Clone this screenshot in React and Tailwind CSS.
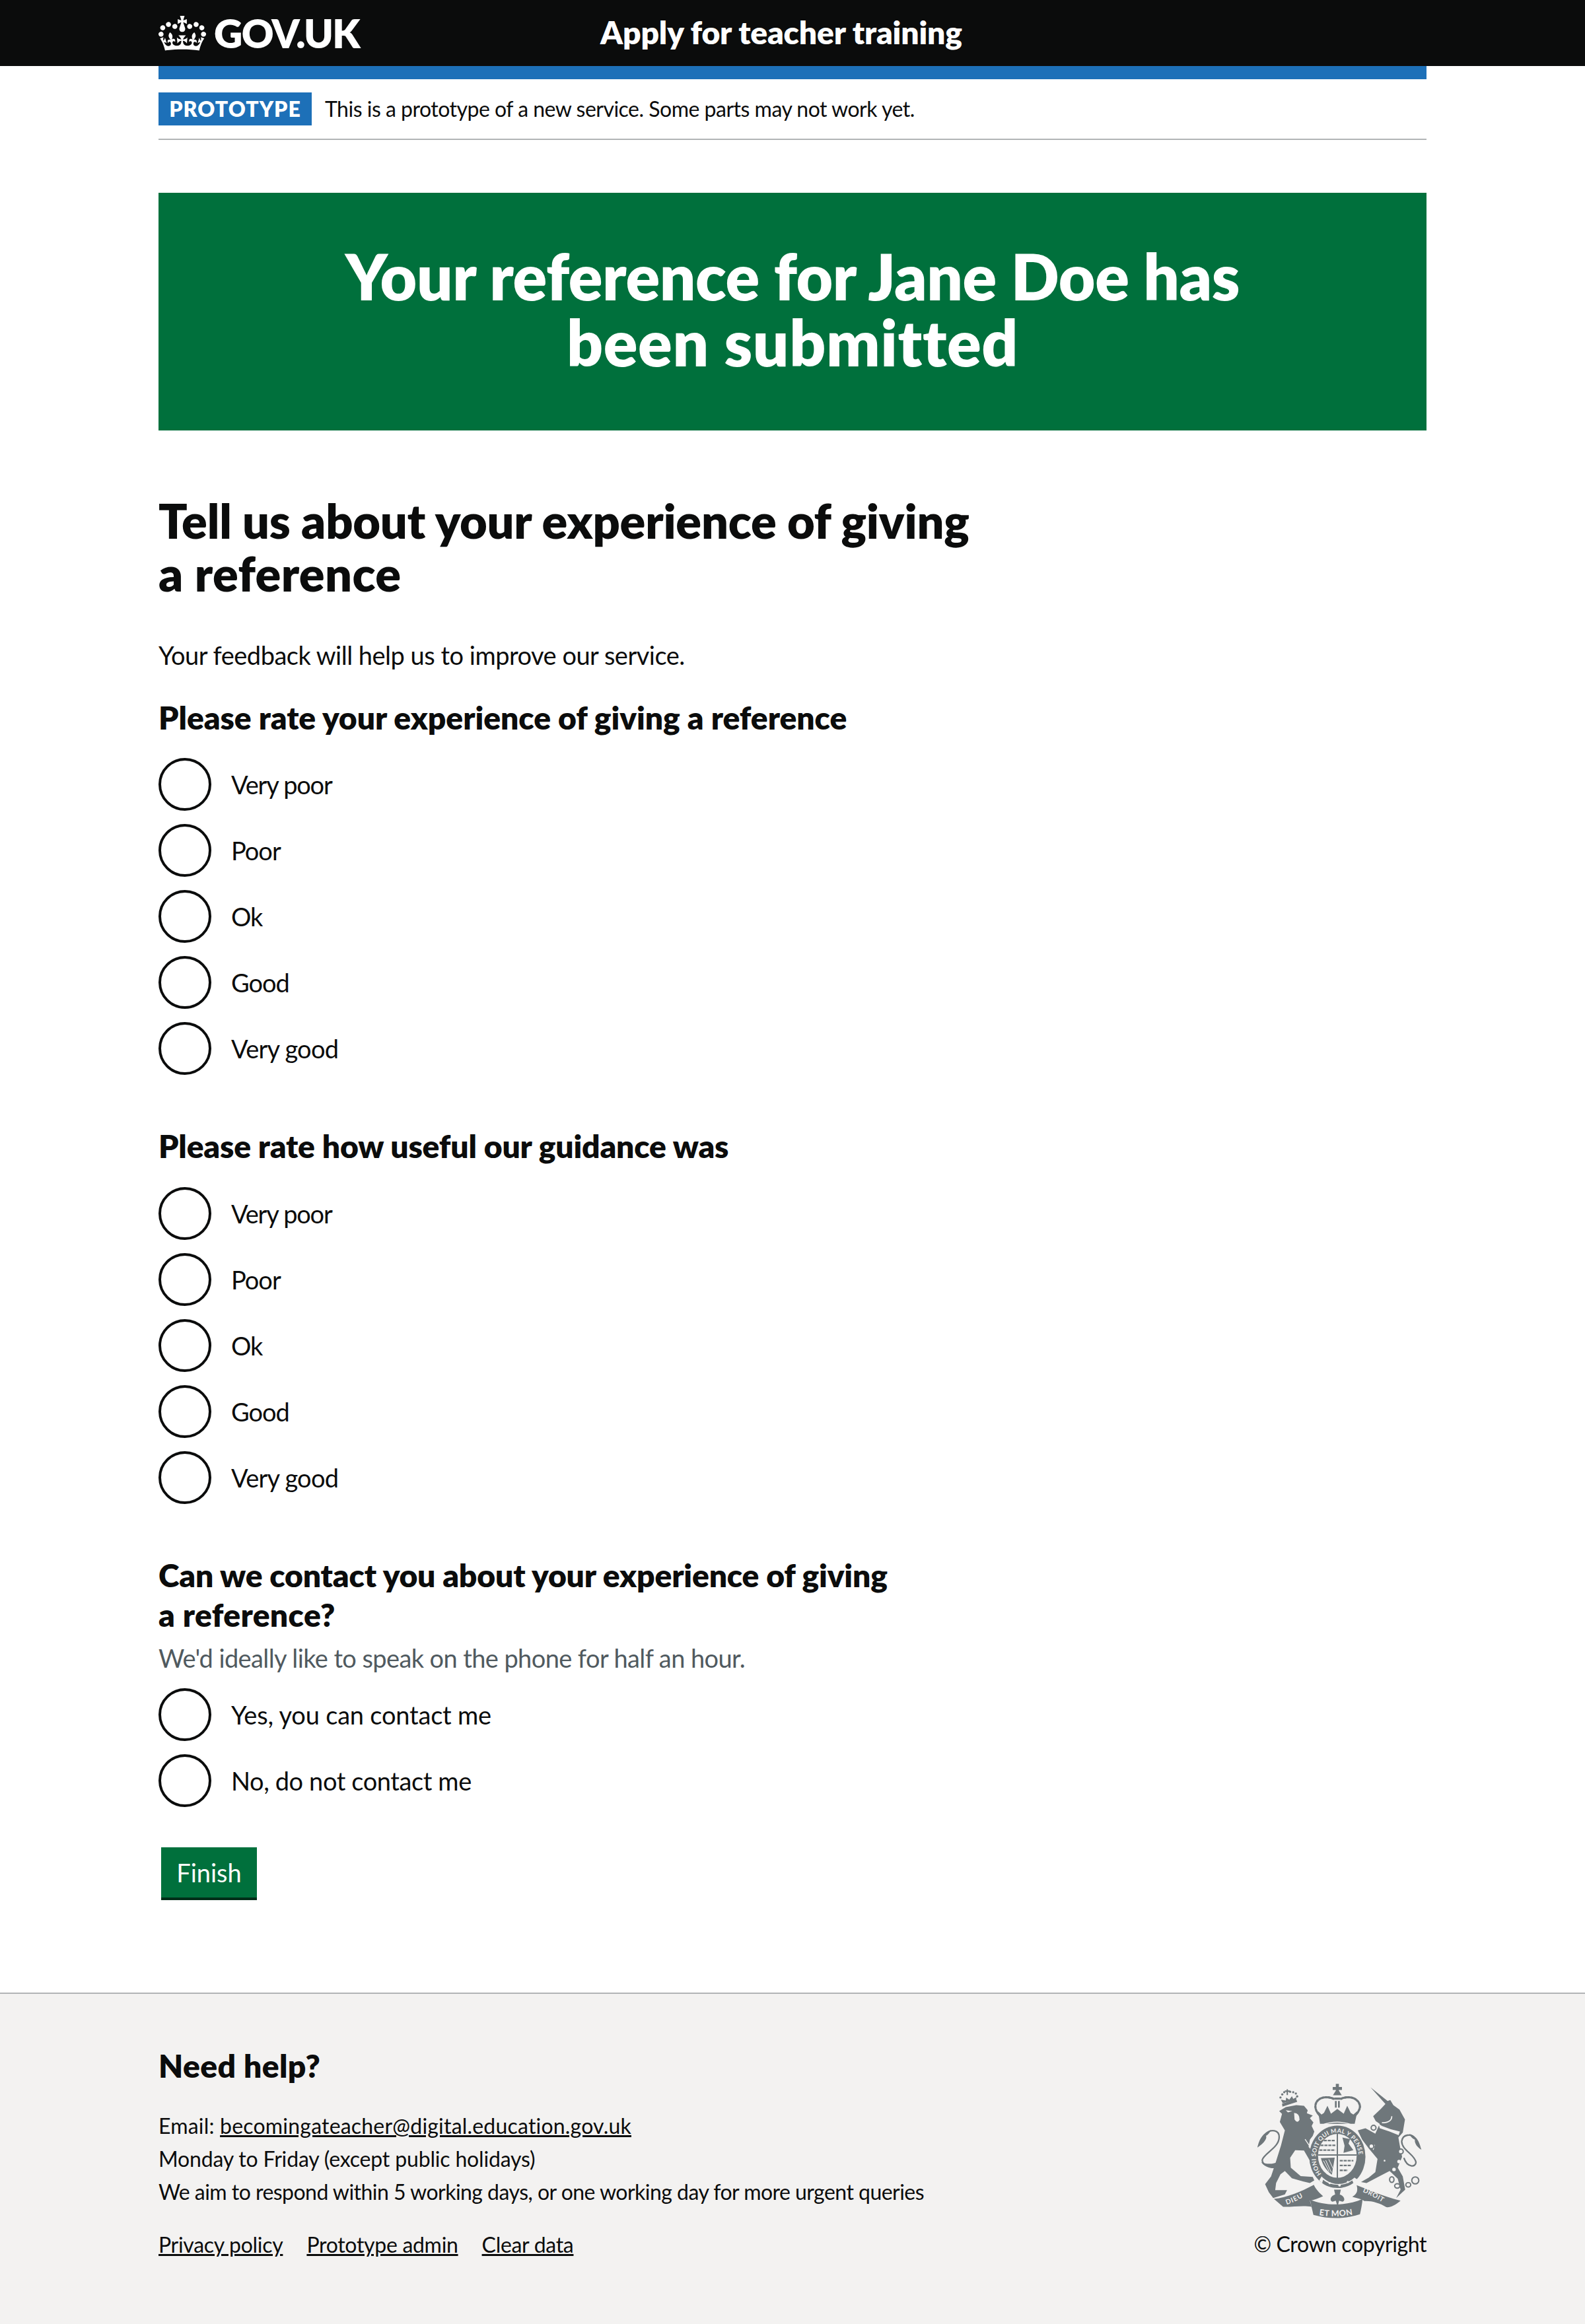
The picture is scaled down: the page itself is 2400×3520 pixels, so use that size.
import React from "react";

const CROWN = "M25 30.2c3.5 1.5 7.7-.2 9.1-3.7 1.5-3.6-.2-7.8-3.9-9.2-3.6-1.4-7.6.3-9.1 3.9-1.4 3.5.3 7.5 3.9 9zM9 39.5c3.6 1.5 7.8-.2 9.2-3.7 1.5-3.6-.2-7.8-3.9-9.1-3.6-1.5-7.6.2-9.1 3.8-1.4 3.5.3 7.5 3.8 9zM4.4 57.2c3.5 1.5 7.7-.2 9.1-3.8 1.5-3.6-.2-7.7-3.9-9.1-3.5-1.5-7.6.3-9.1 3.8-1.4 3.5.3 7.6 3.9 9.1zm38.3-21.4c3.5 1.5 7.7-.2 9.1-3.8 1.5-3.6-.2-7.7-3.9-9.1-3.6-1.5-7.6.3-9.1 3.8-1.3 3.6.4 7.7 3.9 9.1zm64.4-5.6c-3.6 1.5-7.8-.2-9.1-3.7-1.5-3.6.2-7.8 3.8-9.2 3.6-1.4 7.7.3 9.2 3.9 1.3 3.5-.4 7.5-3.9 9zm15.9 9.3c-3.6 1.5-7.7-.2-9.1-3.7-1.5-3.6.2-7.8 3.7-9.1 3.6-1.5 7.7.2 9.2 3.8 1.5 3.5-.3 7.5-3.8 9zm4.7 17.7c-3.6 1.5-7.8-.2-9.2-3.8-1.5-3.6.2-7.7 3.9-9.1 3.6-1.5 7.7.3 9.2 3.8 1.3 3.5-.4 7.6-3.9 9.1zM89.3 35.8c-3.6 1.5-7.8-.2-9.2-3.8-1.4-3.6.2-7.7 3.9-9.1 3.6-1.5 7.7.3 9.2 3.8 1.4 3.6-.3 7.7-3.9 9.1zM69.7 17.7l8.9 4.7V9.3l-8.9 2.8c-.2-.3-.5-.6-.9-.9L72.4 0H59.6l3.5 11.2c-.3.3-.6.5-.9.9l-8.8-2.8v13.1l8.8-4.7c.3.3.6.7.9.9l-5 15.4v.1c-.2.8-.4 1.6-.4 2.4 0 4.1 3.1 7.5 7 8.1h.2c.3 0 .7.1 1 .1.4 0 .7 0 1-.1h.2c4-.6 7.1-4.1 7.1-8.1 0-.8-.1-1.7-.4-2.4V34l-5.1-15.4c.4-.2.7-.6 1-.9zM66 92.8c16.9 0 32.8 1.1 47.1 3.2 4-16.9 8.9-26.7 14-33.5l-9.6-3.4c1 4.9 1.1 7.2 0 10.2-1.5-1.4-3-4.3-4.2-8.7L108.6 76c2.8-2 5-3.2 7.5-3.3-4.4 9.4-10 11.9-13.6 11.2-4.3-.8-6.3-4.6-5.6-7.9 1-4.7 5.7-5.9 8-.5 4.3-8.7-3-11.4-7.6-8.8 7.1-7.2 7.9-13.5 2.1-21.1-8 6.1-8.1 12.3-4.5 20.8-4.7-5.4-12.1-2.5-9.5 6.2 3.4-5.2 7.9-2 7.2 3.1-.6 4.3-6.4 7.8-13.5 7.2-10.3-.9-10.9-8-11.2-13.8 2.5-.5 7.1 1.8 11 7.3L80.2 60c-4.1 4.4-8 5.3-12.3 5.4 1.4-4.4 8-11.6 8-11.6H55.5s6.4 7.2 7.9 11.6c-4.2-.1-8-1-12.3-5.4l1.4 16.4c3.9-5.5 8.5-7.7 10.9-7.3-.3 5.8-.9 12.8-11.1 13.8-7.2.6-12.9-2.9-13.5-7.2-.7-5 3.8-8.3 7.1-3.1 2.7-8.7-4.6-11.6-9.4-6.2 3.7-8.5 3.6-14.7-4.6-20.8-5.8 7.6-5 13.9 2.2 21.1-4.7-2.6-11.9.1-7.7 8.8 2.3-5.5 7.1-4.2 8.1.5.7 3.3-1.3 7.1-5.7 7.9-3.5.7-9-1.8-13.5-11.2 2.5.1 4.7 1.3 7.5 3.3l-4.7-15.4c-1.2 4.4-2.7 7.2-4.3 8.7-1.1-3-.9-5.3 0-10.2l-9.5 3.4c5 6.9 9.9 16.7 14 33.5 14.8-2.1 30.8-3.2 47.7-3.2z";

const G = "#6f777b";
const BG = "#f3f2f1";

function Crest({ w = 250, h = 204 }) {
  return (
    <svg viewBox="130 108 752 612" width={w} height={h} aria-label="Royal coat of arms">
      <defs>
        <path id="garter" d="M428 522 A98 112 0 1 1 566 522" />
        <path id="dieu" d="M266 658 C300 648 335 628 368 606" />
        <path id="etmon" d="M414 706 C460 714 530 714 583 700" />
        <path id="droit" d="M612 600 C650 616 690 638 728 664" />
      </defs>
      {/* lion tail */}
      <path d="M230 470 C195 490 155 480 155 455 C160 425 232 400 232 350 C232 318 195 312 172 335" fill="none" stroke={G} strokeWidth="7" />
      <path d="M133 398 C140 370 150 335 195 318 C190 330 182 340 172 345 C178 355 165 378 133 398Z" fill={G} />
      <path d="M150 465 C175 475 205 475 230 462 L212 492 C190 494 165 485 150 465Z" fill={G} />
      {/* unicorn tail */}
      <path d="M800 445 C815 490 855 490 855 465 C850 430 790 410 790 370 C795 335 835 335 850 355" fill="none" stroke={G} strokeWidth="7" />
      <path d="M880 408 C872 385 868 350 825 336 C830 348 838 358 850 362 C848 380 862 398 880 408Z" fill={G} />
      {/* lion */}
      <path d="M232 232 L262 214 L310 205 L345 208 L362 228 L358 242 L385 252 L372 264 L388 284 L380 300 L392 325 L385 345 L372 362 L366 395 L395 428 L400 462 L372 458 L345 412 L305 410 L282 445 L285 490 L330 528 L385 532 L392 548 L372 560 L340 552 L290 538 L258 505 L238 520 L218 560 L214 592 L268 592 L258 612 L205 628 L185 602 L168 565 L195 530 L215 470 L240 390 L258 320 L235 282 L245 245Z" fill={G} />
      <path d="M262 228 L292 232 L272 238Z M300 240 Q325 240 325 272 Q315 290 302 270Z" fill={BG} />
      <path d="M350 360 L395 428" stroke={BG} strokeWidth="4" />
      {/* lion crown */}
      <g fill={G}>
        <circle cx="238" cy="170" r="5" /><circle cx="246" cy="156" r="5" /><circle cx="255" cy="146" r="5" />
        <circle cx="282" cy="144" r="5" /><circle cx="296" cy="146" r="5" /><circle cx="308" cy="152" r="5" /><circle cx="314" cy="165" r="5" />
        <path d="M258 138 h8 v-5 h6 v5 h8 v7 h-8 v14 h-6 v-14 h-8Z" />
        <path d="M248 196 L240 180 L262 184 L264 170 L278 180 L290 164 L296 176 L312 168 L308 182Z" />
        <path d="M247 212 L314 190 L310 178 L245 198Z" />
      </g>
      {/* royal crown */}
      <path d="M490 108 h14 v14 h14 v14 h-14 v14 h-14 v-14 h-14 v-14 h14Z" fill={G} />
      <path d="M477 160 h40 L505 140 h-16Z" fill={G} />
      <path d="M483 170 h28 v10 h-28Z M486 186 h8 v30 h-8Z M500 186 h8 v30 h-8Z" fill={G} />
      <path d="M480 176 C445 160 398 172 397 210 C397 225 405 240 415 250" fill="none" stroke={G} strokeWidth="10" strokeDasharray="9 6" strokeLinecap="round" />
      <path d="M514 176 C548 160 596 172 600 210 C600 225 590 240 580 250" fill="none" stroke={G} strokeWidth="10" strokeDasharray="9 6" strokeLinecap="round" />
      <path d="M418 290 L414 262 L408 232 L425 248 L436 240 L452 208 L468 244 L497 222 L526 244 L542 208 L558 240 L570 248 L588 232 L582 262 L576 290Z" fill={G} />
      {/* garter */}
      <ellipse cx="497" cy="440" rx="128" ry="142" fill={G} />
      <path d="M425 296 C470 278 525 278 568 296" fill="none" stroke={BG} strokeWidth="4" />
      <text fill={BG} fontFamily="Lato, sans-serif" fontWeight="700" fontSize="27" letterSpacing="1.2">
        <textPath href="#garter" startOffset="1%">HONI SOIT QUI MAL Y PENSE</textPath>
      </text>
      {/* shield */}
      <ellipse cx="497" cy="436" rx="88" ry="100" fill={BG} />
      <path d="M497 336 V540 M409 432 H585" stroke={G} strokeWidth="6" />
      <g stroke={G} strokeWidth="7" strokeDasharray="14 4">
        <path d="M435 366 H488 M420 388 H488 M415 410 H488 M508 458 H570 M508 480 H562 M508 502 H545" />
      </g>
      <path d="M520 352 L555 360 L548 380 L570 410 L525 422 L530 390Z" fill={G} />
      <path d="M422 446 L485 444 L472 522 C450 505 430 480 422 446Z" fill={G} />
      <path d="M444 456 L470 512 M434 458 L460 508 M458 452 L478 495" stroke={BG} strokeWidth="3" />
      {/* buckle */}
      <path d="M425 530 C470 575 530 575 575 535 L590 545 C540 595 460 595 415 548Z" fill={BG} />
      <path d="M432 545 C470 575 530 575 565 548 L570 560 C530 590 465 590 428 560Z" fill={G} />
      <circle cx="462" cy="560" r="5" fill={BG} />
      <circle cx="507" cy="570" r="6" fill={BG} />
      <circle cx="545" cy="555" r="5" fill={BG} />
      {/* unicorn */}
      <path d="M648 124 L726 186 L738 182 L752 205 L780 225 L805 270 L795 330 L775 352 L782 392 L792 440 L772 490 L795 530 L806 590 L765 628 L785 590 L772 540 L735 505 L690 528 L630 560 L605 555 L640 535 L670 510 L680 450 L640 402 L610 362 L590 320 L625 310 L670 335 L690 290 L672 278 L660 255 L695 222 L716 200Z" fill={G} />
      <path d="M685 290 L700 300 L740 315 L782 325 L776 342 L735 325 L690 310Z" fill={BG} />
      <g fill={BG}>
        <circle cx="755" cy="498" r="8" /><circle cx="778" cy="462" r="8" /><circle cx="712" cy="458" r="4" />
        <path d="M650 395 L668 385 L662 410Z" />
      </g>
      <path d="M745 255 Q745 285 700 285" fill="none" stroke={BG} strokeWidth="5" />
      <g fill={BG} stroke={G} strokeWidth="6">
        <circle cx="662" cy="308" r="11" />
        <circle cx="652" cy="392" r="11" />
        <circle cx="786" cy="416" r="11" />
      </g>
      <g fill="none" stroke={G} strokeWidth="6">
        <ellipse cx="745" cy="544" rx="10" ry="13" />
        <ellipse cx="770" cy="573" rx="12" ry="10" />
        <ellipse cx="820" cy="568" rx="11" ry="10" />
        <circle cx="852" cy="548" r="16" />
      </g>
      {/* motto ribbons */}
      <path d="M208 632 C270 625 330 600 390 568 C395 580 405 595 432 620 C410 630 390 638 372 640 L380 668 C340 660 290 670 250 668 Z" fill={G} />
      <path d="M372 635 C440 665 540 665 612 632 C610 655 605 680 600 702 C530 725 460 725 388 705 C382 680 378 660 372 635Z" fill={G} />
      <path d="M565 622 C590 610 590 590 585 570 C640 590 700 620 785 640 C760 660 740 672 720 670 C690 650 650 640 620 642 C612 634 590 630 565 622Z" fill={G} />
      <text fill={BG} fontFamily="Lato, sans-serif" fontWeight="700" fontSize="31" letterSpacing="3">
        <textPath href="#dieu">DIEU</textPath>
      </text>
      <text fill={BG} fontFamily="Lato, sans-serif" fontWeight="700" fontSize="38" letterSpacing="1">
        <textPath href="#etmon">ET MON</textPath>
      </text>
      <text fill={BG} fontFamily="Lato, sans-serif" fontWeight="700" fontSize="30" letterSpacing="2">
        <textPath href="#droit">DROIT</textPath>
      </text>
      <path d="M482 590 H513 L508 612 C530 620 535 640 520 645 L505 640 L498 668 L490 640 L475 645 C460 640 465 620 487 612Z" fill={G} />
    </svg>
  );
}

function Radio({ name, label, track }) {
  return (
    <label className="flex items-center h-[80px] mb-[20px]">
      <input type="radio" name={name} className="appearance-none w-[80px] h-[80px] rounded-full border-4 border-[#0b0c0c] bg-white shrink-0" />
      <span className={"ml-[30px] text-[38px] leading-[50px] text-[#0b0c0c] " + track}>{label}</span>
    </label>
  );
}

const RATINGS = [
  ["Very poor", "tracking-[-1.2px]"],
  ["Poor", "tracking-[-1px]"],
  ["Ok", "tracking-[-1px]"],
  ["Good", "tracking-[-1px]"],
  ["Very good", "tracking-[-0.75px]"],
];

export default function App() {
  return (
    <div className="font-['Lato',sans-serif] [font-variant-ligatures:none] text-[#0b0c0c] bg-white w-full">
      <header className="bg-[#0b0c0c] h-[100px]">
        <div className="w-[1920px] mx-auto flex items-center h-full text-white">
          <div className="flex items-center w-[669px]">
            <svg viewBox="0 0 132 97" width="72" height="53" fill="currentColor" className="shrink-0"><path fillRule="evenodd" d={CROWN} /></svg>
            <span className="ml-[12px] text-[60px] font-extrabold leading-none tracking-[-1.7px]">GOV.UK</span>
          </div>
          <span className="pb-[3px] text-[48px] font-extrabold leading-none tracking-[-0.17px]">Apply for teacher training</span>
        </div>
      </header>
      <div className="w-[1920px] mx-auto">
        <div className="h-[20px] bg-[#1d70b8]" />
        <div className="flex items-center py-[20px] border-b-2 border-[#b1b4b6]">
          <strong className="h-[50px] w-[232px] bg-[#1d70b8] text-white text-[32px] leading-[50px] font-extrabold tracking-[1px] text-center">PROTOTYPE</strong>
          <span className="ml-[20px] text-[32px] leading-[50px] tracking-[-0.5px]">This is a prototype of a new service. Some parts may not work yet.</span>
        </div>

        <main className="pt-[80px]">
          <div className="bg-[#00703c] text-white text-center pt-[76px] pb-[84px]">
            <h1 className="text-[96px] leading-[100px] font-extrabold tracking-[-0.4px]">Your reference for Jane Doe has<br /><span className="tracking-[0.6px]">been submitted</span></h1>
          </div>
          <h2 className="mt-[96px] text-[72px] leading-[80px] font-extrabold tracking-[-0.23px]">Tell us about your experience of giving<br /><span className="tracking-[0.4px]">a reference</span></h2>
          <p className="mt-[59px] text-[38px] leading-[50px] tracking-[-0.5px]">Your feedback will help us to improve our service.</p>
          <fieldset className="mt-[40px]">
            <legend className="text-[48px] leading-[60px] font-extrabold tracking-[-0.05px] mb-[31px]">Please rate your experience of giving a reference</legend>
            {RATINGS.map(([r, t]) => <Radio key={r} name="a" label={r} track={t} />)}
          </fieldset>
          <fieldset className="mt-[58px]">
            <legend className="text-[48px] leading-[60px] font-extrabold tracking-[-0.17px] mb-[32px]">Please rate how useful our guidance was</legend>
            {RATINGS.map(([r, t]) => <Radio key={r} name="b" label={r} track={t} />)}
          </fieldset>
          <fieldset className="mt-[58px]">
            <legend className="text-[48px] leading-[60px] font-extrabold tracking-[-0.18px]">Can we contact you about your experience of giving<br /><span className="tracking-[0.37px]">a reference?</span></legend>
            <div className="mt-[10px] mb-[21px] text-[38px] leading-[50px] tracking-[-0.6px] text-[#505a5f]">We'd ideally like to speak on the phone for half an hour.</div>
            <Radio name="c" label="Yes, you can contact me" track="tracking-[-0.2px]" />
            <Radio name="c" label="No, do not contact me" track="tracking-[-0.4px]" />
          </fieldset>
          <button className="block mt-[41px] ml-[4px] w-[145px] h-[80px] bg-[#00703c] border-b-4 border-[#002d18] text-white text-[38px] leading-none">Finish</button>
        </main>
      </div>
      <footer className="mt-[140px] bg-[#f3f2f1] border-t-2 border-[#b1b4b6] h-[502px]">
        <div className="w-[1920px] mx-auto flex justify-between">
          <div className="pt-[79px]">
            <h2 className="text-[48px] leading-[60px] font-extrabold tracking-[0.4px]">Need help?</h2>
            <div className="mt-[36px] text-[32px] leading-[50px]">
              <p className="tracking-[0.2px]">Email: <a href="#" className="underline">becomingateacher@digital.education.gov.uk</a></p>
              <p className="tracking-[-0.17px]">Monday to Friday (except public holidays)</p>
              <p className="tracking-[-0.53px]">We aim to respond within 5 working days, or one working day for more urgent queries</p>
            </div>
            <div className="mt-[30px] flex gap-[36px] text-[32px] leading-[50px] tracking-[-0.3px]">
              <a href="#" className="underline">Privacy policy</a>
              <a href="#" className="underline">Prototype admin</a>
              <a href="#" className="underline">Clear data</a>
            </div>
          </div>
          <div className="flex flex-col items-end pt-[136px]">
            <div className="mr-[7px]"><Crest /></div>
            <span className="mt-[14px] text-[32px] leading-[50px] tracking-[-0.4px]">© Crown copyright</span>
          </div>
        </div>
      </footer>
    </div>
  );
}
